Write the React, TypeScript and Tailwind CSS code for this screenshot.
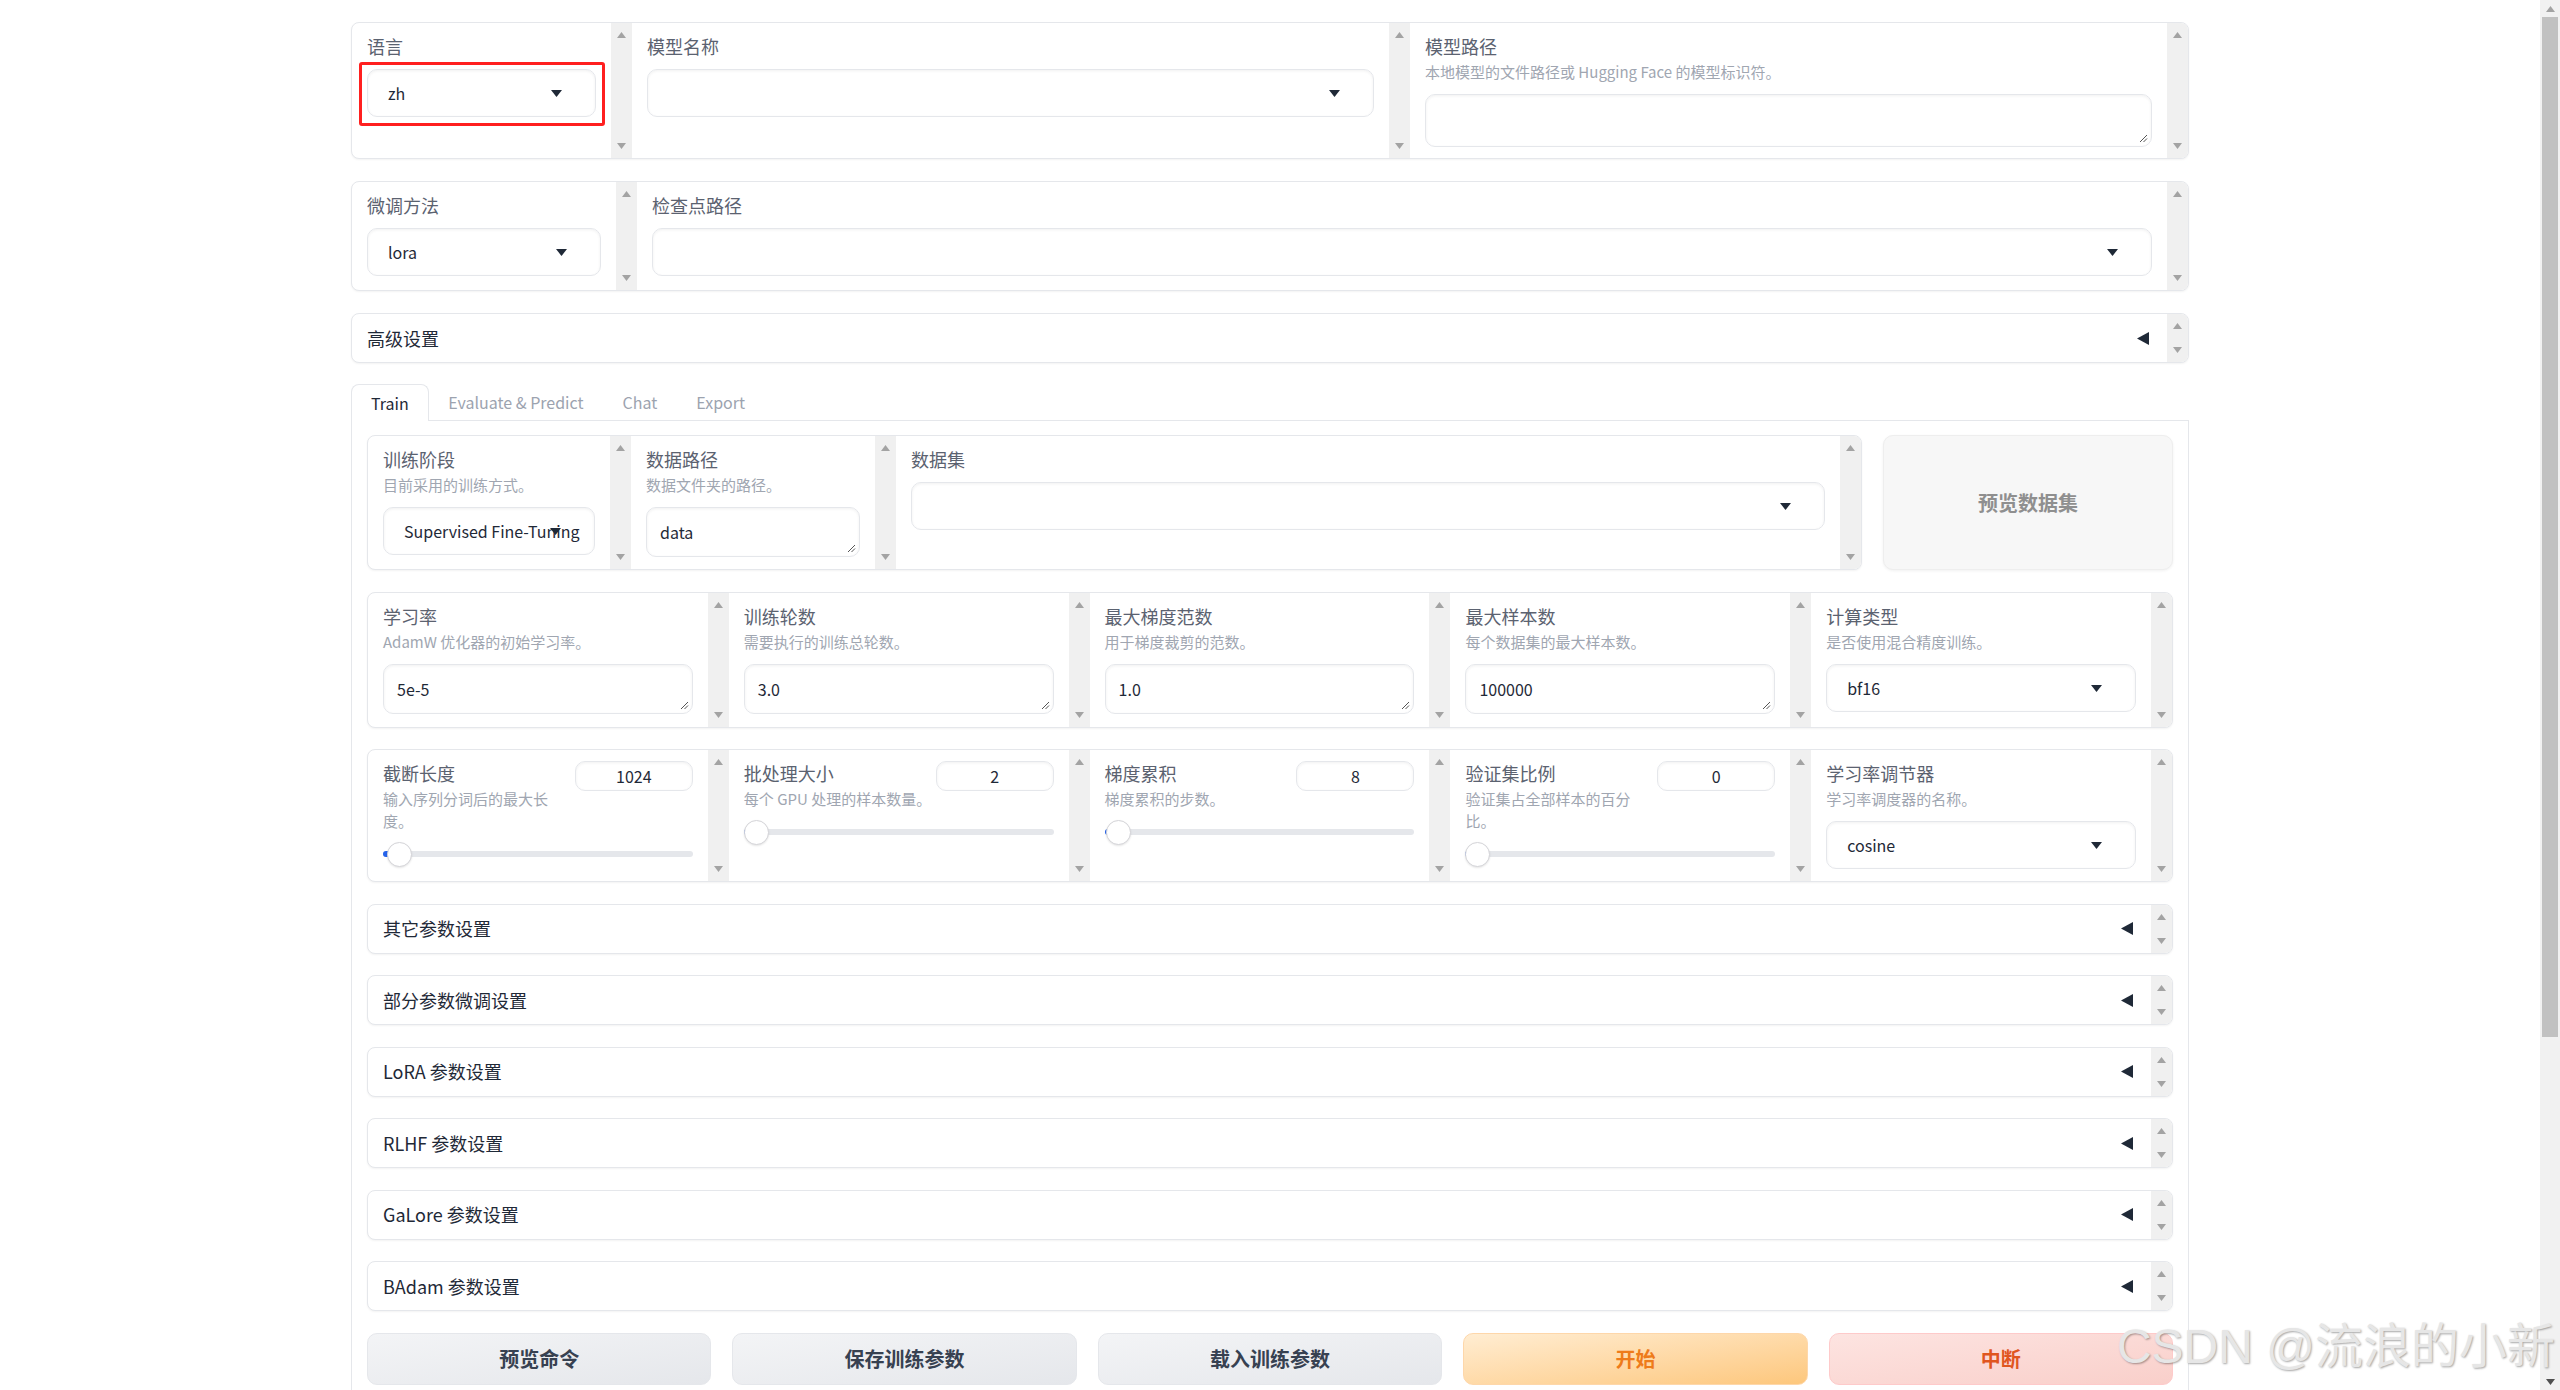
import React from 'react';

const box = 'rounded-[8px] border border-[#e5e7eb] bg-white shadow-[0_1px_2px_rgba(0,0,0,0.05)] overflow-hidden';
const field = 'rounded-[10px] border border-[#e5e7eb] bg-white shadow-[inset_0_1px_3px_rgba(0,0,0,0.06)]';

function Arrow({ dir, color = '#a3a3a3' }: { dir: 'up' | 'down'; color?: string }) {
  return (
    <svg width="9" height="6" viewBox="0 0 9 6">
      <path d={dir === 'up' ? 'M4.5 0L9 6H0z' : 'M0 0h9L4.5 6z'} fill={color} />
    </svg>
  );
}

function Strip() {
  return (
    <div className="w-[21px] shrink-0 bg-[#f0f0f0] flex flex-col items-center justify-between py-[9px]">
      <Arrow dir="up" />
      <Arrow dir="down" />
    </div>
  );
}

function Cell({ className = '', children }: { className?: string; children: React.ReactNode }) {
  return (
    <div className={`flex min-w-0 ${className}`}>
      <div className="flex-1 min-w-0 px-[15px] pt-[11px] pb-[12px]">{children}</div>
      <Strip />
    </div>
  );
}

function Label({ title, info }: { title: string; info?: string }) {
  return (
    <div>
      <div className="text-[18px] leading-[24px] text-[#5b6270]">{title}</div>
      {info && <div className="mt-[3px] text-[15px] leading-[22px] text-[#a0a6b1]">{info}</div>}
    </div>
  );
}

function Dropdown({ value = '' }: { value?: string }) {
  return (
    <div className={`mt-[11px] relative h-[48px] ${field} flex items-center pl-[20px] text-[16px] text-[#1f2937] whitespace-nowrap`}>
      {value}
      <svg className="absolute right-[33px] top-[20px]" width="11" height="7" viewBox="0 0 11 7">
        <path d="M0 0h11L5.5 7z" fill="#1f2937" />
      </svg>
    </div>
  );
}

function Resize() {
  return (
    <svg className="absolute right-[3px] bottom-[3px]" width="9" height="9" viewBox="0 0 9 9">
      <path d="M8 1L1 8M8 4.5L4.5 8" stroke="#555" strokeWidth="1" />
    </svg>
  );
}

function TextBox({ value = '', tall = false }: { value?: string; tall?: boolean }) {
  return (
    <div className={`mt-[11px] relative ${tall ? 'h-[53px]' : 'h-[50px]'} ${field} flex items-center pl-[13px] text-[16px] text-[#1f2937]`}>
      {value}
      <Resize />
    </div>
  );
}

function Slider({ offset }: { offset: number }) {
  return (
    <div className="mt-[9px] h-[26px] relative flex items-center">
      <div className="h-[6px] w-full rounded-full bg-[#e5e7eb]" />
      <div className="absolute left-0 h-[6px] rounded-l-full bg-[#2563eb]" style={{ width: offset + 4 }} />
      <div
        className="absolute top-[0.5px] w-[25px] h-[25px] rounded-full bg-white border border-[#d4d4d8] shadow-[0_1px_2px_rgba(0,0,0,0.1)]"
        style={{ left: offset }}
      />
    </div>
  );
}

function SliderCell({ title, info, value, offset }: { title: string; info: string; value: string; offset: number }) {
  return (
    <Cell className="flex-1">
      <div className="flex justify-between items-start">
        <div className="w-[188px]">
          <Label title={title} info={info} />
        </div>
        <div className={`w-[118px] h-[30px] ${field} rounded-[8px] flex items-center justify-center text-[16px] text-[#1f2937]`}>
          {value}
        </div>
      </div>
      <Slider offset={offset} />
    </Cell>
  );
}

function Accordion({ title }: { title: string }) {
  return (
    <div className={`h-[50px] flex ${box}`}>
      <div className="flex-1 flex items-center justify-between pl-[15px] pr-[18px] text-[18px] text-[#1f2937]">
        <span>{title}</span>
        <svg width="12" height="13" viewBox="0 0 12 13">
          <path d="M12 0v13L0 6.5z" fill="#1f2937" />
        </svg>
      </div>
      <Strip />
    </div>
  );
}

const tabs = ['Train', 'Evaluate & Predict', 'Chat', 'Export'];

export default function App() {
  return (
    <div className="relative h-[1390px] w-full flex overflow-hidden bg-white font-['Noto_Sans_CJK_SC','Noto_Sans',sans-serif]">
      <div className="flex-1 min-w-0">
        <div className="w-[1838px] mx-auto pt-[22px] flex flex-col">
          {/* top settings */}
          <div className={`h-[137px] flex ${box}`}>
            <Cell className="w-[280px] shrink-0">
              <Label title="语言" />
              <div className="relative pt-px -mt-px">
                <Dropdown value="zh" />
                <div className="absolute left-[-8px] right-[-9px] top-[5px] bottom-[-9px] border-[3px] border-[#ff1f1f] rounded-[3px]" />
              </div>
            </Cell>
            <Cell className="flex-1">
              <Label title="模型名称" />
              <Dropdown />
            </Cell>
            <Cell className="flex-1">
              <Label title="模型路径" info="本地模型的文件路径或 Hugging Face 的模型标识符。" />
              <TextBox tall />
            </Cell>
          </div>

          <div className={`mt-[22px] h-[110px] flex ${box}`}>
            <Cell className="w-[285px] shrink-0">
              <Label title="微调方法" />
              <Dropdown value="lora" />
            </Cell>
            <Cell className="flex-1">
              <Label title="检查点路径" />
              <Dropdown />
            </Cell>
          </div>

          <div className="mt-[22px]">
            <Accordion title="高级设置" />
          </div>

          {/* tabs */}
          <div className="mt-[21px] flex items-end h-[37px] border-b border-[#e5e7eb]">
            {tabs.map((t, i) =>
              i === 0 ? (
                <div
                  key={t}
                  className="h-[37px] -mb-px px-[19px] flex items-center rounded-t-[8px] border border-b-0 border-[#e5e7eb] bg-white text-[16px] text-[#1f2937]"
                >
                  {t}
                </div>
              ) : (
                <div key={t} className="h-[36px] px-[19.5px] flex items-center text-[16px] text-[#9ca3af]">
                  {t}
                </div>
              )
            )}
          </div>

          <div className="border-x border-[#e5e7eb] px-[15px] pt-[14px] pb-[20px] flex flex-col gap-[21.5px]">
            <div className="h-[135px] flex gap-[21px]">
              <div className={`flex-1 flex ${box}`}>
                <Cell className="w-[263px] shrink-0">
                  <Label title="训练阶段" info="目前采用的训练方式。" />
                  <Dropdown value="Supervised Fine-Tuning" />
                </Cell>
                <Cell className="w-[265px] shrink-0">
                  <Label title="数据路径" info="数据文件夹的路径。" />
                  <TextBox value="data" />
                </Cell>
                <Cell className="flex-1">
                  <Label title="数据集" />
                  <Dropdown />
                </Cell>
              </div>
              <div className="w-[290px] shrink-0 rounded-[10px] border border-[#eeeeee] bg-[#f7f7f7] shadow-[0_1px_3px_rgba(0,0,0,0.06)] flex items-center justify-center text-[20px] font-bold text-[#8f8f8f]">
                预览数据集
              </div>
            </div>

            <div className={`h-[136px] flex ${box}`}>
              <Cell className="flex-1">
                <Label title="学习率" info="AdamW 优化器的初始学习率。" />
                <TextBox value="5e-5" />
              </Cell>
              <Cell className="flex-1">
                <Label title="训练轮数" info="需要执行的训练总轮数。" />
                <TextBox value="3.0" />
              </Cell>
              <Cell className="flex-1">
                <Label title="最大梯度范数" info="用于梯度裁剪的范数。" />
                <TextBox value="1.0" />
              </Cell>
              <Cell className="flex-1">
                <Label title="最大样本数" info="每个数据集的最大样本数。" />
                <TextBox value="100000" />
              </Cell>
              <Cell className="flex-1">
                <Label title="计算类型" info="是否使用混合精度训练。" />
                <Dropdown value="bf16" />
              </Cell>
            </div>

            <div className={`h-[133px] flex ${box}`}>
              <SliderCell title="截断长度" info="输入序列分词后的最大长度。" value="1024" offset={4} />
              <SliderCell title="批处理大小" info="每个 GPU 处理的样本数量。" value="2" offset={0} />
              <SliderCell title="梯度累积" info="梯度累积的步数。" value="8" offset={1} />
              <SliderCell title="验证集比例" info="验证集占全部样本的百分比。" value="0" offset={0} />
              <Cell className="flex-1">
                <Label title="学习率调节器" info="学习率调度器的名称。" />
                <Dropdown value="cosine" />
              </Cell>
            </div>

            {['其它参数设置', '部分参数微调设置', 'LoRA 参数设置', 'RLHF 参数设置', 'GaLore 参数设置', 'BAdam 参数设置'].map((t) => (
              <Accordion key={t} title={t} />
            ))}

            <div className="h-[52px] flex gap-[21px]">
              {['预览命令', '保存训练参数', '载入训练参数'].map((t) => (
                <div
                  key={t}
                  className="flex-1 rounded-[10px] border border-[#e5e7eb] bg-linear-to-br from-[#f3f4f6] to-[#e5e7eb] flex items-center justify-center text-[20px] font-bold text-[#374151]"
                >
                  {t}
                </div>
              ))}
              <div className="flex-1 rounded-[10px] border border-[#fed7aa] bg-linear-to-br from-[#ffedd2] to-[#fdc77c] flex items-center justify-center text-[20px] font-bold text-[#ee7b1a]">
                开始
              </div>
              <div className="flex-1 rounded-[10px] border border-[#fecaca] bg-linear-to-br from-[#fde4e1] to-[#f9cfca] flex items-center justify-center text-[20px] font-bold text-[#e0561f]">
                中断
              </div>
            </div>
          </div>
        </div>
      </div>

      {/* browser scrollbar */}
      <div className="w-[20px] shrink-0 bg-[#f1f1f1] flex flex-col items-center">
        <div className="h-[17px] flex items-center">
          <Arrow dir="up" color="#a3a3a3" />
        </div>
        <div className="w-[16px] h-[1020px] bg-[#c1c1c1]" />
        <div className="flex-1" />
        <div className="h-[17px] flex items-center">
          <Arrow dir="down" color="#505050" />
        </div>
      </div>

      {/* watermark */}
      <div className="absolute right-[5px] top-[1316px] text-[48px] leading-[62px] whitespace-nowrap text-[#e6e6e6] font-['Liberation_Sans','Noto_Sans_CJK_SC',sans-serif] [text-shadow:1px_1px_2px_rgba(0,0,0,0.35)]">
        CSDN @流浪的小新
      </div>
    </div>
  );
}
